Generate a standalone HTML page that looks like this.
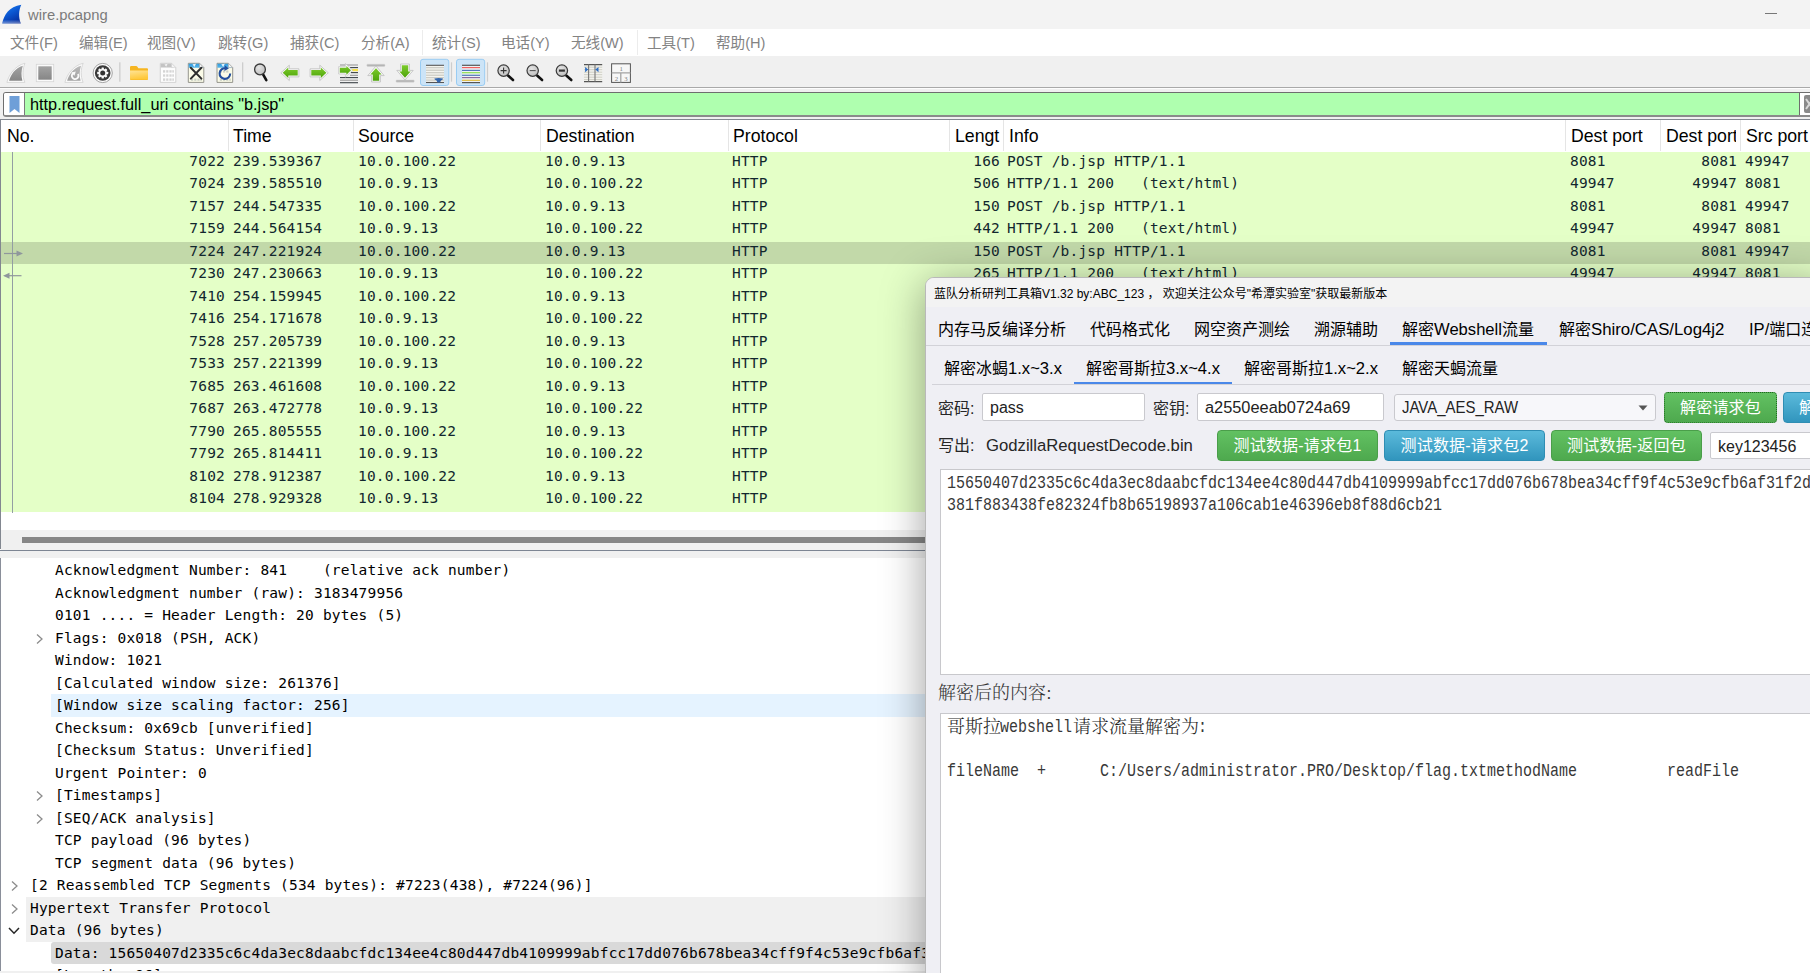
<!DOCTYPE html>
<html lang="zh-CN">
<head>
<meta charset="utf-8">
<title>wire.pcapng</title>
<style>
html,body{margin:0;padding:0;}
body{width:1810px;height:973px;overflow:hidden;position:relative;background:#fff;
  font-family:"Liberation Sans","Noto Sans CJK SC",sans-serif;color:#000;}
.abs{position:absolute;}
/* ---------- wireshark main window ---------- */
#titlebar{left:0;top:0;width:1810px;height:29px;background:#f3f3f3;}
#titlebar .ttl{left:28px;top:5px;font-size:14.8px;line-height:20px;color:#7b7b7b;white-space:nowrap;}
#menubar{left:0;top:29px;width:1810px;height:27px;background:#fff;}
#menubar span{position:absolute;top:4px;font-size:14.6px;line-height:21px;color:#838383;white-space:nowrap;}
#toolbar{left:0;top:56px;width:1810px;height:31px;background:#f0f0f0;}
#tbline{left:0;top:87px;width:1810px;height:1px;background:#a9a9a9;}
#tbline2{left:0;top:88px;width:1810px;height:1px;background:#fdfdfd;}
#filterarea{left:0;top:89px;width:1810px;height:30px;background:#f0f0f0;}
#filter{left:3px;top:92px;width:1815px;height:22px;background:#fff;border:1px solid #6e6e6e;border-bottom:2px solid #8a8a8a;border-radius:3px 0 0 3px;}
#filter .grn{left:21px;top:0;width:1774px;height:22px;background:#afffaf;border-right:1px solid #6e6e6e;}
#filter .bm{left:0;top:0;width:20px;height:22px;background:#fff;border-right:1px solid #7a7a7a;border-radius:2px 0 0 2px;}
#filter .txt{left:26px;top:0;font-size:16.3px;line-height:22px;white-space:nowrap;color:#000;}
#fclear{left:1801px;top:93px;width:9px;height:22px;}
/* packet list */
#plist{left:0;top:119px;width:1810px;height:430px;background:#fff;border-top:1px solid #828790;border-left:1px solid #828790;box-sizing:border-box;}
#phead{left:1px;top:120px;width:1809px;height:31px;background:#fff;}
#phead span{position:absolute;top:1px;font-size:17.7px;line-height:31px;white-space:nowrap;color:#000;}
#phead i{position:absolute;top:0;width:1px;height:31px;background:#e5e5e5;}
.prow{position:absolute;left:1px;width:1809px;height:22.5px;background:#e4ffc7;color:#12272e;
  font-family:"DejaVu Sans Mono","Liberation Mono",monospace;font-size:14.5px;letter-spacing:0.2px;line-height:22.5px;white-space:pre;}
.prow span{position:absolute;top:-2px;}
.prow .r{text-align:right;}
.prow.sel{background:#c2d9a9;}

/* bottom of packet list + detail pane */
#pindline{left:11.5px;top:151.5px;width:1.5px;height:361px;background:#939ea3;}
#hscroll{left:1px;top:530px;width:1809px;height:20px;background:#f0f0f0;}
#hthumb{left:22px;top:537px;width:1788px;height:6px;background:#868686;}
#pbottom{left:0;top:550px;width:1810px;height:1px;background:#7d8593;}
#split{left:0;top:551px;width:1810px;height:7px;background:#f0f0f0;}
#dpane{left:0;top:558px;width:1810px;height:412.5px;background:#fff;border-left:1.3px solid #8a8f9a;box-sizing:border-box;overflow:hidden;}
#dfoot{left:0;top:970.5px;width:1810px;height:3px;background:#f0f0f0;}
.drow{position:absolute;left:0;width:1810px;height:22.5px;color:#000;
  font-family:"DejaVu Sans Mono","Liberation Mono",monospace;font-size:14.5px;letter-spacing:0.2px;line-height:22.5px;white-space:pre;}
.drow span{position:absolute;top:0px;}
.drow b{position:absolute;top:0;right:0;height:22.5px;display:block;}
.drow b.hov{background:#e5f3ff;}
.drow b.proto{background:#f0f0f0;}
.drow b.dsel{background:#d9d9d9;border-radius:3px 0 0 3px;top:0.5px;height:21.5px;}
.drow svg.chev{position:absolute;}

/* ---------- tool window ---------- */
#tw{left:925px;top:277px;width:901px;height:720px;background:#efeff4;border:1px solid #b9b9b9;border-radius:9px 0 0 0;box-sizing:border-box;
  box-shadow:0 6px 44px 0 rgba(0,0,0,0.38);overflow:hidden;}
#tw .tbar{left:-1px;top:0;width:901px;height:29px;background:#f3f3f3;}
#tw .tbar span{position:absolute;left:8px;top:6.5px;font-size:12px;line-height:18px;color:#000;white-space:nowrap;}
#tw .tabs span,#tw .subtabs span{position:absolute;font-size:16px;line-height:24px;white-space:nowrap;color:#000;}
#tw .tabs span{top:40px;}
#tw .subtabs span{top:79px;}
#tw span i{font-style:normal;}
#tw .hl{position:absolute;height:1px;background:#d2d2d8;}
#tw .ul{position:absolute;height:3px;background:#4a88e9;}
#tw .lbl{position:absolute;font-size:16px;line-height:24px;color:#262626;white-space:nowrap;}
#tw .inp{position:absolute;background:#fff;border:1px solid #c9c9ce;border-radius:2px;box-sizing:border-box;font-size:16px;color:#222;white-space:nowrap;overflow:hidden;}
#tw .inp span{position:absolute;left:7px;top:1px;line-height:26px;}
#tw .btn{position:absolute;height:31px;border-radius:4px;box-sizing:border-box;color:#fff;font-size:16px;line-height:30px;text-align:center;white-space:nowrap;letter-spacing:0.2px;}
#tw .g{background:linear-gradient(#62c162,#4ea94e);border:1px solid #4a9e4a;}
#tw .b{background:linear-gradient(#5bbadb,#3195bd);border:1px solid #2f8db3;}
#tw .ta{position:absolute;background:#fff;border:1px solid #c8c8cc;box-sizing:border-box;}
#tw .mono{position:absolute;font-family:"Liberation Mono",monospace;font-size:18px;line-height:22px;color:#383838;white-space:pre;
  transform:scaleX(0.8332);transform-origin:0 0;}
#tw .cj{position:absolute;font-family:"Noto Serif CJK SC",serif;font-size:18px;line-height:22px;color:#1e1e1e;white-space:pre;font-weight:300;}
</style>
</head>
<body>
<!-- ======= Wireshark window ======= -->
<div id="titlebar" class="abs">
  <svg class="abs" style="left:0;top:0" width="26" height="28" viewBox="0 0 26 28">
    <defs><linearGradient id="fin" x1="0.25" y1="0" x2="0.8" y2="1"><stop offset="0" stop-color="#1a7cf0"/><stop offset="0.45" stop-color="#0a55cf"/><stop offset="1" stop-color="#052a98"/></linearGradient>
    <linearGradient id="finb" x1="0" y1="0" x2="0" y2="1"><stop offset="0" stop-color="#fff" stop-opacity="0"/><stop offset="1" stop-color="#fff" stop-opacity="0.45"/></linearGradient>
    <clipPath id="finc"><path d="M2.2 23.5 C4 15 9 6.6 21.3 4.8 C18.8 10 18.2 17 20.9 23.5 Z"/></clipPath></defs>
    <path d="M2.2 23.5 C4 15 9 6.6 21.3 4.8 C18.8 10 18.2 17 20.9 23.5 Z" fill="url(#fin)"/>
    <rect x="2" y="19.6" width="20" height="4" fill="url(#finb)" clip-path="url(#finc)"/>
  </svg>
  <div class="abs ttl">wire.pcapng</div>
  <div class="abs" style="left:1765px;top:13px;width:12px;height:1px;background:#777"></div>
</div>
<div id="menubar" class="abs">
  <span style="left:10px">文件(F)</span>
  <span style="left:79px">编辑(E)</span>
  <span style="left:147px">视图(V)</span>
  <span style="left:218px">跳转(G)</span>
  <span style="left:290px">捕获(C)</span>
  <span style="left:361px">分析(A)</span>
  <span style="left:432px">统计(S)</span>
  <span style="left:501px">电话(Y)</span>
  <span style="left:571px">无线(W)</span>
  <span style="left:647px">工具(T)</span>
  <span style="left:716px">帮助(H)</span>
  <div class="abs" style="left:422px;top:1px;width:1px;height:25px;background:#ececec"></div>
  <div class="abs" style="left:637px;top:1px;width:1px;height:25px;background:#ececec"></div>
</div>
<div id="toolbar" class="abs">
<!--TB-BEGIN-->
<svg class="abs" style="left:0;top:0" width="660" height="31" viewBox="0 56 660 31">
<defs>
 <linearGradient id="gGray" x1="0" y1="0" x2="0" y2="1"><stop offset="0" stop-color="#a3a3a3"/><stop offset="1" stop-color="#868686"/></linearGradient>
 <linearGradient id="gGray2" x1="0" y1="0" x2="0" y2="1"><stop offset="0" stop-color="#b9b9b9"/><stop offset="1" stop-color="#a2a2a2"/></linearGradient>
 <linearGradient id="gFold" x1="0" y1="0" x2="0.3" y2="1"><stop offset="0" stop-color="#ffe394"/><stop offset="1" stop-color="#ffc83a"/></linearGradient>
 <linearGradient id="gGreen" x1="0" y1="0" x2="0" y2="1"><stop offset="0" stop-color="#7ccb2b"/><stop offset="1" stop-color="#4da30a"/></linearGradient>
 <linearGradient id="gHead" x1="0" y1="0" x2="0" y2="1"><stop offset="0" stop-color="#2f9be0"/><stop offset="1" stop-color="#5ab6ea"/></linearGradient>
 <radialGradient id="gLens" cx="0.4" cy="0.35" r="0.7"><stop offset="0" stop-color="#e4e4e4"/><stop offset="1" stop-color="#bdbdbd"/></radialGradient>
</defs>
<!-- 1 start capture (disabled fin) -->
<path d="M6.9 82.4 C8.8 75 14.5 66 25 63.2 C22.5 69 22.2 76 24.9 82.4 Z" fill="#fbfbfb" stroke="#d0d0d0" stroke-width="0.8"/>
<path d="M9.1 80.8 C10.9 74.8 15 68 22.8 65.8 C21.2 70.5 21 76 22.4 80.8 Z" fill="url(#gGray)"/>
<!-- 2 stop -->
<rect x="36.3" y="64.3" width="17.4" height="17.4" fill="#fafafa" stroke="#d6d6d6" stroke-width="0.8"/>
<rect x="38.3" y="66.3" width="13.4" height="13.4" fill="url(#gGray)"/>
<!-- 3 restart fin -->
<path d="M64.9 82.4 C66.8 75 72.5 66 83.2 63.2 C80.7 69 80.4 76 83.1 82.4 Z" fill="#fbfbfb" stroke="#d0d0d0" stroke-width="0.8"/>
<path d="M67.1 80.8 C68.9 74.8 73 68 81 65.8 C79.4 70.5 79.2 76 80.6 80.8 Z" fill="url(#gGray2)"/>
<path d="M77.9 74 A3.3 3.3 0 1 1 73.4 73" fill="none" stroke="#fafafa" stroke-width="1.8"/>
<path d="M71.4 72.4 L75.8 71.6 L74.4 75.7 Z" fill="#fafafa"/>
<!-- 4 options gear -->
<circle cx="102.7" cy="73" r="9.6" fill="#fdfdfd" stroke="#8e8e8e" stroke-width="0.8"/>
<circle cx="102.7" cy="73" r="7.8" fill="#3a3a3a"/>
<g fill="#fafafa" transform="translate(102.7 73)">
 <circle r="4.1"/>
 <g id="teeth"><rect x="-1.2" y="-5.5" width="2.4" height="11" rx="0.4"/></g>
 <rect x="-1.2" y="-5.5" width="2.4" height="11" rx="0.4" transform="rotate(45)"/>
 <rect x="-1.2" y="-5.5" width="2.4" height="11" rx="0.4" transform="rotate(90)"/>
 <rect x="-1.2" y="-5.5" width="2.4" height="11" rx="0.4" transform="rotate(135)"/>
</g>
<circle cx="102.7" cy="73" r="2.5" fill="#333"/>
<!-- sep -->
<rect x="119.2" y="62.3" width="1.3" height="19.4" fill="#cdcdcd"/>
<!-- 6 folder -->
<path d="M130 67.2 Q130 66 131.2 66 H136 Q137 66 137.6 67 L138.4 68.2 H147 Q148 68.2 148 69.2 V79 Q148 80 147 80 H131 Q130 80 130 79 Z" fill="#f6b521"/>
<path d="M130 70.6 H148 V78.6 Q148 79.4 147.2 79.4 H130.8 Q130 79.4 130 78.6 Z" fill="url(#gFold)"/>
<!-- 7 save (disabled) -->
<path d="M160.3 63.3 H171.5 L175.8 67.6 V82.4 H160.3 Z" fill="#fdfdfd" stroke="#cfcfcf" stroke-width="0.9"/>
<path d="M160.7 63.7 H171.3 L173.5 66 V67.6 H160.7 Z" fill="#c4c4c4"/>
<path d="M171.5 63.3 V67.6 H175.8 Z" fill="#f4f4f4" stroke="#cfcfcf" stroke-width="0.6"/>
<path d="M164.5 64.5 L166.2 66.8 L167.6 63.8 Z" fill="#f3f3f3"/>
<g fill="#d4d4d4"><rect x="163" y="70.2" width="2.2" height="2.4"/><rect x="166.2" y="70.2" width="2.2" height="2.4"/><rect x="169.4" y="70.2" width="2.2" height="2.4"/><rect x="172.3" y="70.2" width="1.6" height="2.4"/>
<rect x="163" y="74.3" width="2.2" height="2.4"/><rect x="166.2" y="74.3" width="2.2" height="2.4"/><rect x="169.4" y="74.3" width="2.2" height="2.4"/><rect x="172.3" y="74.3" width="1.6" height="2.4"/>
<rect x="163" y="78.4" width="2.2" height="2.4"/><rect x="166.2" y="78.4" width="2.2" height="2.4"/><rect x="169.4" y="78.4" width="2.2" height="2.4"/><rect x="172.3" y="78.4" width="1.6" height="2.4"/></g>
<!-- 8 close file -->
<path d="M188.3 63.3 H199.5 L203.8 67.6 V82.4 H188.3 Z" fill="#fbfbe8" stroke="#8a8a82" stroke-width="0.9"/>
<path d="M188.7 63.7 H199.3 L203.4 67.8 H188.7 Z" fill="url(#gHead)"/>
<path d="M199.5 63.3 V67.6 H203.8 Z" fill="#f4f4f4" stroke="#9a9a9a" stroke-width="0.5"/>
<path d="M192.5 64.2 L194.4 66.9 L196 63.8 Z" fill="#eaf4fb"/>
<g fill="#c9cfc4"><rect x="191" y="78.6" width="2.2" height="2.2"/><rect x="194.2" y="78.6" width="2.2" height="2.2"/><rect x="197.4" y="78.6" width="2.2" height="2.2"/><rect x="200.3" y="78.6" width="1.6" height="2.2"/></g>
<path d="M190.8 67.8 L201.4 78.6 M201.4 67.8 L190.8 78.6" stroke="#2d2d2d" stroke-width="2" stroke-linecap="round"/>
<!-- 9 reload file -->
<path d="M217 63.3 H228.4 L232.7 67.6 V82.4 H217 Z" fill="#fbfbe8" stroke="#8a8a82" stroke-width="0.9"/>
<path d="M217.4 63.7 H228.2 L232.3 67.8 H217.4 Z" fill="url(#gHead)"/>
<path d="M228.4 63.3 V67.6 H232.7 Z" fill="#f4f4f4" stroke="#9a9a9a" stroke-width="0.5"/>
<path d="M221.3 64.2 L223.2 66.9 L224.8 63.8 Z" fill="#eaf4fb"/>
<g fill="#c9cfc4"><rect x="219.8" y="70.4" width="2.2" height="2.2"/><rect x="223" y="70.4" width="2.2" height="2.2"/><rect x="226.2" y="70.4" width="2.2" height="2.2"/>
<rect x="219.8" y="78.6" width="2.2" height="2.2"/><rect x="223" y="78.6" width="2.2" height="2.2"/><rect x="226.2" y="78.6" width="2.2" height="2.2"/><rect x="229.2" y="78.6" width="1.6" height="2.2"/></g>
<path d="M230.2 73.6 A5.3 5.3 0 1 1 225.6 68.3" fill="none" stroke="#234f9e" stroke-width="2.1"/>
<path d="M224.8 65.2 L228.9 68.4 L224.4 71 Z" fill="#234f9e"/>
<!-- sep -->
<rect x="242" y="62.3" width="1.3" height="19.4" fill="#cdcdcd"/>
<!-- 11 find -->
<path d="M263.2 74.6 L266.3 80.2" stroke="#111" stroke-width="2.6" stroke-linecap="round"/>
<circle cx="260" cy="69.4" r="5.4" fill="url(#gLens)" stroke="#3a3a3a" stroke-width="1.3"/>
<!-- 12 back -->
<path d="M280.8 72.8 L289.3 65.2 V68.8 H298.9 V76.9 H289.3 V80.5 Z" fill="#f8f8f8" stroke="#bdbdbd" stroke-width="0.8"/>
<path d="M282.7 72.8 L288.3 67.6 V70.1 H297.7 V75.6 H288.3 V78.1 Z" fill="url(#gGreen)"/>
<!-- 13 forward -->
<path d="M328.3 72.8 L319.8 65.2 V68.8 H310.1 V76.9 H319.8 V80.5 Z" fill="#f8f8f8" stroke="#bdbdbd" stroke-width="0.8"/>
<path d="M326.4 72.8 L320.8 67.6 V70.1 H311.3 V75.6 H320.8 V78.1 Z" fill="url(#gGreen)"/>
<!-- 14 goto packet -->
<g stroke-width="1.1"><path d="M340 65 H358" stroke="#9a9a9a"/><path d="M350 67.6 H358" stroke="#3b4246"/><path d="M351 72.6 H358" stroke="#3b4246"/><path d="M350 75.3 H358" stroke="#9a9a9a"/>
<path d="M340 77.6 H358" stroke="#3b4246"/><path d="M340 80.2 H358" stroke="#9a9a9a"/><path d="M340 82.7 H358" stroke="#3b4246"/></g>
<rect x="352" y="69" width="6" height="2.2" fill="#f7e24a"/>
<path d="M352.6 70.3 L345.4 63.4 V66.6 H338.6 V74 H345.4 V77.2 Z" fill="#f8f8f8" stroke="#c4c4c4" stroke-width="0.7"/>
<path d="M351 70.3 L346.4 65.9 V67.8 H339.8 V72.8 H346.4 V74.7 Z" fill="url(#gGreen)"/>
<!-- 15 first -->
<rect x="366.8" y="64.2" width="18.2" height="2.2" rx="0.8" fill="#b4b4b4" stroke="#d5d5d5" stroke-width="0.5"/>
<path d="M376 66 L384.2 75.6 H380.4 V82 H371.6 V75.6 H367.8 Z" fill="#f8f8f8" stroke="#bdbdbd" stroke-width="0.8"/>
<path d="M376 68.2 L381.6 74.5 H379.2 V80.8 H372.8 V74.5 H370.4 Z" fill="url(#gGreen)"/>
<!-- 16 last -->
<rect x="396" y="80" width="18.2" height="2.2" rx="0.8" fill="#b4b4b4" stroke="#d5d5d5" stroke-width="0.5"/>
<path d="M405 80 L413.2 70.4 H409.4 V64 H400.6 V70.4 H396.8 Z" fill="#f8f8f8" stroke="#bdbdbd" stroke-width="0.8"/>
<path d="M405 77.8 L410.6 71.5 H408.2 V65.2 H401.8 V71.5 H399.4 Z" fill="url(#gGreen)"/>
<!-- 17 autoscroll (checked) -->
<rect x="420.5" y="59.3" width="28.3" height="26.2" rx="2.5" fill="#cce4f7" stroke="#99ccf3" stroke-width="1"/>
<rect x="426" y="65" width="18" height="17.8" fill="#f4f4ef"/>
<g stroke-width="1.1"><path d="M426 65.3 H444" stroke="#555"/><path d="M426 67.7 H444" stroke="#c6c6be"/><path d="M426 70.2 H444" stroke="#c6c6be"/><path d="M426 72.7 H444" stroke="#c6c6be"/><path d="M426 75.2 H444" stroke="#c6c6be"/><path d="M426 77.7 H444" stroke="#c6c6be"/><path d="M426 80.1 H444" stroke="#c6c6be"/><path d="M426 82.5 H444" stroke="#555"/></g>
<path d="M434.4 78.6 Q438.6 77.4 443 78.6 Q443.4 79.6 441 80.4 L440 82.4 H437.4 L436.6 80.4 Q434 79.6 434.4 78.6 Z" fill="#3166ae"/>
<!-- sep -->
<rect x="450.9" y="62.3" width="1.2" height="19.4" fill="#cdcdcd"/>
<!-- 19 colorize (checked) -->
<rect x="456.5" y="59.3" width="28.2" height="26.2" rx="2.5" fill="#cce4f7" stroke="#99ccf3" stroke-width="1"/>
<rect x="462" y="65" width="18" height="17.8" fill="#eef2f6"/>
<g stroke-width="1.2"><path d="M462 65.3 H480" stroke="#555"/><path d="M462 67.6 H480" stroke="#f0605f"/><path d="M462 70.4 H480" stroke="#4f7ab8"/><path d="M462 72.7 H480" stroke="#8dde4f"/><path d="M462 75.3 H480" stroke="#4f7ab8"/><path d="M462 77.6 H480" stroke="#8a6a9c"/><path d="M462 80.3 H480" stroke="#e0bb3e"/><path d="M462 82.6 H480" stroke="#555"/></g>
<!-- sep -->
<rect x="486.9" y="62.3" width="1.2" height="19.4" fill="#cdcdcd"/>
<!-- 21-23 zoom -->
<g id="zm">
 <path d="M508 75.6 L513 80" stroke="#111" stroke-width="2.6" stroke-linecap="round"/>
 <circle cx="503.6" cy="70.6" r="5.7" fill="url(#gLens)" stroke="#3a3a3a" stroke-width="1.2"/>
</g>
<path d="M500.6 70.6 H506.6 M503.6 67.6 V73.6" stroke="#333" stroke-width="1.1"/>
<g transform="translate(29.1 0)"><path d="M508 75.6 L513 80" stroke="#111" stroke-width="2.6" stroke-linecap="round"/><circle cx="503.6" cy="70.6" r="5.7" fill="url(#gLens)" stroke="#3a3a3a" stroke-width="1.2"/><path d="M500.6 70.6 H506.6" stroke="#555" stroke-width="1.1"/></g>
<g transform="translate(58.3 0)"><path d="M508 75.6 L513 80" stroke="#111" stroke-width="2.6" stroke-linecap="round"/><circle cx="503.6" cy="70.6" r="5.7" fill="url(#gLens)" stroke="#3a3a3a" stroke-width="1.2"/><path d="M500.6 70.6 H506.6" stroke="#333" stroke-width="2.2"/></g>
<!-- 24 resize columns -->
<rect x="584" y="64.6" width="18.2" height="16.8" fill="#f3f3ee"/>
<g stroke-width="0.9" stroke="#c9c9c1"><path d="M584 67.2 H602.2"/><path d="M584 69.7 H602.2"/><path d="M584 72.2 H602.2"/><path d="M584 74.7 H602.2"/><path d="M584 77.2 H602.2"/><path d="M584 79.6 H602.2"/></g>
<path d="M584 64.6 H602.2 M584 81.6 H602.2" stroke="#555" stroke-width="1.1"/>
<path d="M588.6 64.6 V81.6 M595 64.6 V81.6" stroke="#777" stroke-width="1.1"/>
<path d="M585.1 67 L588.3 69.6 L585.1 72.2 Z M598.5 67 L595.3 69.6 L598.5 72.2 Z" fill="#2f6fc4"/>
<!-- 25 layout -->
<rect x="611.6" y="63.8" width="18.8" height="18.6" fill="#f7f7f7" stroke="#555" stroke-width="1"/>
<path d="M611.6 72.9 H630.4 M620.8 72.9 V82.4" stroke="#a4a4a4" stroke-width="1.3"/>
<g font-family="Liberation Serif, serif" font-size="6.8" fill="#808080" text-anchor="middle"><text x="621.2" y="70.8">1</text><text x="616.4" y="80.6">2</text><text x="626" y="80.6">3</text></g>
</svg>
<!--TB-END-->
</div>
<div id="tbline" class="abs"></div>
<div id="tbline2" class="abs"></div>
<div id="filterarea" class="abs"></div>
<div id="filter" class="abs">
  <div class="abs bm"><svg class="abs" style="left:5px;top:3px" width="11" height="17" viewBox="0 0 11 17"><path d="M0.5 0 H10.5 V17 L5.5 13 L0.5 17 Z" fill="#6e9fd8"/></svg></div>
  <div class="abs grn"></div>
  <div class="abs txt">http.request.full_uri contains "b.jsp"</div>
</div>
<div id="fclear" class="abs"><svg class="abs" style="left:3px;top:2px" width="6" height="18" viewBox="0 0 6 18"><rect x="0" y="0" width="10" height="18" rx="2" fill="#8a8a8a"/><path d="M2 4 L9 14 M9 4 L2 14" stroke="#d8d8d8" stroke-width="2"/></svg></div>

<div id="plist" class="abs"></div>
<div id="phead" class="abs">
  <span style="left:6px">No.</span>
  <span style="left:232px">Time</span>
  <span style="left:357px">Source</span>
  <span style="left:545px">Destination</span>
  <span style="left:732px">Protocol</span>
  <span style="left:954px">Lengt</span>
  <span style="left:1008px">Info</span>
  <span style="left:1570px">Dest port</span>
  <span style="left:1665px;width:70px;overflow:hidden">Dest port</span>
  <span style="left:1745px">Src port</span>
  <i style="left:227px"></i><i style="left:352px"></i><i style="left:539px"></i><i style="left:727px"></i>
  <i style="left:948px"></i><i style="left:1002px"></i><i style="left:1564px"></i><i style="left:1659px"></i><i style="left:1739px"></i>
</div>
<!--PR-BEGIN-->
<div class="prow" style="top:151.5px"><span class="r" style="right:1585px">7022</span><span style="left:232px">239.539367</span><span style="left:357px">10.0.100.22</span><span style="left:544px">10.0.9.13</span><span style="left:731px">HTTP</span><span class="r" style="right:810px">166</span><span style="left:1006px">POST /b.jsp HTTP/1.1</span><span style="left:1569px">8081</span><span class="r" style="right:73px">8081</span><span style="left:1744px">49947</span></div>
<div class="prow" style="top:174.0px"><span class="r" style="right:1585px">7024</span><span style="left:232px">239.585510</span><span style="left:357px">10.0.9.13</span><span style="left:544px">10.0.100.22</span><span style="left:731px">HTTP</span><span class="r" style="right:810px">506</span><span style="left:1006px">HTTP/1.1 200   (text/html)</span><span style="left:1569px">49947</span><span class="r" style="right:73px">49947</span><span style="left:1744px">8081</span></div>
<div class="prow" style="top:196.5px"><span class="r" style="right:1585px">7157</span><span style="left:232px">244.547335</span><span style="left:357px">10.0.100.22</span><span style="left:544px">10.0.9.13</span><span style="left:731px">HTTP</span><span class="r" style="right:810px">150</span><span style="left:1006px">POST /b.jsp HTTP/1.1</span><span style="left:1569px">8081</span><span class="r" style="right:73px">8081</span><span style="left:1744px">49947</span></div>
<div class="prow" style="top:219.0px"><span class="r" style="right:1585px">7159</span><span style="left:232px">244.564154</span><span style="left:357px">10.0.9.13</span><span style="left:544px">10.0.100.22</span><span style="left:731px">HTTP</span><span class="r" style="right:810px">442</span><span style="left:1006px">HTTP/1.1 200   (text/html)</span><span style="left:1569px">49947</span><span class="r" style="right:73px">49947</span><span style="left:1744px">8081</span></div>
<div class="prow sel" style="top:241.5px"><span class="r" style="right:1585px">7224</span><span style="left:232px">247.221924</span><span style="left:357px">10.0.100.22</span><span style="left:544px">10.0.9.13</span><span style="left:731px">HTTP</span><span class="r" style="right:810px">150</span><span style="left:1006px">POST /b.jsp HTTP/1.1</span><span style="left:1569px">8081</span><span class="r" style="right:73px">8081</span><span style="left:1744px">49947</span></div>
<div class="prow" style="top:264.0px"><span class="r" style="right:1585px">7230</span><span style="left:232px">247.230663</span><span style="left:357px">10.0.9.13</span><span style="left:544px">10.0.100.22</span><span style="left:731px">HTTP</span><span class="r" style="right:810px">265</span><span style="left:1006px">HTTP/1.1 200   (text/html)</span><span style="left:1569px">49947</span><span class="r" style="right:73px">49947</span><span style="left:1744px">8081</span></div>
<div class="prow" style="top:286.5px"><span class="r" style="right:1585px">7410</span><span style="left:232px">254.159945</span><span style="left:357px">10.0.100.22</span><span style="left:544px">10.0.9.13</span><span style="left:731px">HTTP</span></div>
<div class="prow" style="top:309.0px"><span class="r" style="right:1585px">7416</span><span style="left:232px">254.171678</span><span style="left:357px">10.0.9.13</span><span style="left:544px">10.0.100.22</span><span style="left:731px">HTTP</span></div>
<div class="prow" style="top:331.5px"><span class="r" style="right:1585px">7528</span><span style="left:232px">257.205739</span><span style="left:357px">10.0.100.22</span><span style="left:544px">10.0.9.13</span><span style="left:731px">HTTP</span></div>
<div class="prow" style="top:354.0px"><span class="r" style="right:1585px">7533</span><span style="left:232px">257.221399</span><span style="left:357px">10.0.9.13</span><span style="left:544px">10.0.100.22</span><span style="left:731px">HTTP</span></div>
<div class="prow" style="top:376.5px"><span class="r" style="right:1585px">7685</span><span style="left:232px">263.461608</span><span style="left:357px">10.0.100.22</span><span style="left:544px">10.0.9.13</span><span style="left:731px">HTTP</span></div>
<div class="prow" style="top:399.0px"><span class="r" style="right:1585px">7687</span><span style="left:232px">263.472778</span><span style="left:357px">10.0.9.13</span><span style="left:544px">10.0.100.22</span><span style="left:731px">HTTP</span></div>
<div class="prow" style="top:421.5px"><span class="r" style="right:1585px">7790</span><span style="left:232px">265.805555</span><span style="left:357px">10.0.100.22</span><span style="left:544px">10.0.9.13</span><span style="left:731px">HTTP</span></div>
<div class="prow" style="top:444.0px"><span class="r" style="right:1585px">7792</span><span style="left:232px">265.814411</span><span style="left:357px">10.0.9.13</span><span style="left:544px">10.0.100.22</span><span style="left:731px">HTTP</span></div>
<div class="prow" style="top:466.5px"><span class="r" style="right:1585px">8102</span><span style="left:232px">278.912387</span><span style="left:357px">10.0.100.22</span><span style="left:544px">10.0.9.13</span><span style="left:731px">HTTP</span></div>
<div class="prow" style="top:489.0px"><span class="r" style="right:1585px">8104</span><span style="left:232px">278.929328</span><span style="left:357px">10.0.9.13</span><span style="left:544px">10.0.100.22</span><span style="left:731px">HTTP</span></div>
<!--PR-END-->
<div id="pindline" class="abs"></div>
<svg class="abs" style="left:2px;top:247px" width="22" height="34" viewBox="0 0 22 34">
  <path d="M2 6.5 H16" stroke="#8f979c" stroke-width="1.2" fill="none"/><path d="M14.5 3.5 L21 6.5 L14.5 9.5 Z" fill="#8f979c"/>
  <path d="M6 28.7 H19.5" stroke="#8f979c" stroke-width="1.2" fill="none"/><path d="M7.5 25.7 L1 28.7 L7.5 31.7 Z" fill="#8f979c"/>
</svg>
<div id="hscroll" class="abs"></div>
<div id="hthumb" class="abs"></div>
<div id="pbottom" class="abs"></div>
<div id="split" class="abs"></div>
<div id="dpane" class="abs"></div>
<!--DR-BEGIN-->
<div class="drow" style="top:559.0px"><span style="left:55px">Acknowledgment Number: 841    (relative ack number)</span></div>
<div class="drow" style="top:581.5px"><span style="left:55px">Acknowledgment number (raw): 3183479956</span></div>
<div class="drow" style="top:604.0px"><span style="left:55px">0101 .... = Header Length: 20 bytes (5)</span></div>
<div class="drow" style="top:626.5px"><svg class="chev" style="left:36px;top:6px" width="8" height="12" viewBox="0 0 8 12"><path d="M1 1.4 L6 6 L1 10.6" fill="none" stroke="#8c8c8c" stroke-width="1.3"/></svg><span style="left:55px">Flags: 0x018 (PSH, ACK)</span></div>
<div class="drow" style="top:649.0px"><span style="left:55px">Window: 1021</span></div>
<div class="drow" style="top:671.5px"><span style="left:55px">[Calculated window size: 261376]</span></div>
<div class="drow" style="top:694.0px"><b class="hov" style="left:51px"></b><span style="left:55px">[Window size scaling factor: 256]</span></div>
<div class="drow" style="top:716.5px"><span style="left:55px">Checksum: 0x69cb [unverified]</span></div>
<div class="drow" style="top:739.0px"><span style="left:55px">[Checksum Status: Unverified]</span></div>
<div class="drow" style="top:761.5px"><span style="left:55px">Urgent Pointer: 0</span></div>
<div class="drow" style="top:784.0px"><svg class="chev" style="left:36px;top:6px" width="8" height="12" viewBox="0 0 8 12"><path d="M1 1.4 L6 6 L1 10.6" fill="none" stroke="#8c8c8c" stroke-width="1.3"/></svg><span style="left:55px">[Timestamps]</span></div>
<div class="drow" style="top:806.5px"><svg class="chev" style="left:36px;top:6px" width="8" height="12" viewBox="0 0 8 12"><path d="M1 1.4 L6 6 L1 10.6" fill="none" stroke="#8c8c8c" stroke-width="1.3"/></svg><span style="left:55px">[SEQ/ACK analysis]</span></div>
<div class="drow" style="top:829.0px"><span style="left:55px">TCP payload (96 bytes)</span></div>
<div class="drow" style="top:851.5px"><span style="left:55px">TCP segment data (96 bytes)</span></div>
<div class="drow" style="top:874.0px"><svg class="chev" style="left:11px;top:6px" width="8" height="12" viewBox="0 0 8 12"><path d="M1 1.4 L6 6 L1 10.6" fill="none" stroke="#8c8c8c" stroke-width="1.3"/></svg><span style="left:30px">[2 Reassembled TCP Segments (534 bytes): #7223(438), #7224(96)]</span></div>
<div class="drow" style="top:896.5px"><b class="proto" style="left:26px"></b><svg class="chev" style="left:11px;top:6px" width="8" height="12" viewBox="0 0 8 12"><path d="M1 1.4 L6 6 L1 10.6" fill="none" stroke="#8c8c8c" stroke-width="1.3"/></svg><span style="left:30px">Hypertext Transfer Protocol</span></div>
<div class="drow" style="top:919.0px"><b class="proto" style="left:26px"></b><svg class="chev" style="left:8px;top:8px" width="12" height="8" viewBox="0 0 12 8"><path d="M1 1 L6 6.2 L11 1" fill="none" stroke="#262626" stroke-width="1.5"/></svg><span style="left:30px">Data (96 bytes)</span></div>
<div class="drow" style="top:941.5px"><b class="dsel" style="left:51px"></b><span style="left:55px">Data: 15650407d2335c6c4da3ec8daabcfdc134ee4c80d447db4109999abfcc17dd076b678bea34cff9f4c53e9cfb6af31f2d381f883438fe82324fb8b65198937a106cab1e46396eb8f88d6cb21</span></div>
<div class="drow" style="top:964.0px"><span style="left:55px">[Length: 96]</span></div>
<!--DR-END-->
<div id="dfoot" class="abs"></div>

<!-- ======= Blue-team tool window ======= -->
<div id="tw" class="abs"><div class="abs" style="left:1px;top:0">
  <div class="abs tbar"><span>蓝队分析研判工具箱V1.32 by:ABC_123 ， 欢迎关注公众号"希潭实验室"获取最新版本</span></div>
  <div class="tabs">
    <span style="left:11px">内存马反编译分析</span>
    <span style="left:163px">代码格式化</span>
    <span style="left:267px">网空资产测绘</span>
    <span style="left:387px">溯源辅助</span>
    <span style="left:475px">解密<i style="font-size:16.6px">Webshell</i>流量</span>
    <span style="left:632px">解密<i style="font-size:16.8px">Shiro/CAS/Log4j2</i></span>
    <span style="left:822px"><i style="font-size:16.6px">IP/</i>端口连接分析</span>
  </div>
  <div class="ul" style="left:463px;top:64px;width:157px"></div>
  <div class="hl" style="left:-1px;top:67px;width:901px"></div>
  <div class="subtabs">
    <span style="left:17px">解密冰蝎<i style="font-size:16.6px">1.x~3.x</i></span>
    <span style="left:159px">解密哥斯拉<i style="font-size:16.6px">3.x~4.x</i></span>
    <span style="left:317px">解密哥斯拉<i style="font-size:16.6px">1.x~2.x</i></span>
    <span style="left:475px">解密天蝎流量</span>
  </div>
  <div class="ul" style="left:147px;top:104px;width:158px"></div>
  <div class="hl" style="left:5px;top:106px;width:895px"></div>

  <div class="lbl" style="left:11px;top:119px">密码:</div>
  <div class="inp" style="left:55px;top:115px;width:163px;height:28px"><span>pass</span></div>
  <div class="lbl" style="left:226px;top:119px">密钥:</div>
  <div class="inp" style="left:270px;top:115px;width:187px;height:28px"><span style="font-size:16.35px;top:0">a2550eeab0724a69</span></div>
  <div class="inp" style="left:467px;top:116px;width:262px;height:27px;background:#f7f7fa;border-radius:3px"><span style="line-height:25px;font-size:17px;top:0;transform:scaleX(0.88);transform-origin:0 0">JAVA_AES_RAW</span>
    <svg class="abs" style="left:243px;top:10px" width="10" height="6" viewBox="0 0 10 6"><path d="M0.5 0.5 H9.5 L5 5.5 Z" fill="#555"/></svg></div>
  <div class="btn g" style="left:737px;top:114px;width:113px;border:1px dotted #1f6a1f">解密请求包</div>
  <div class="btn b" style="left:856px;top:114px;width:113px">解密返回包</div>

  <div class="lbl" style="left:11px;top:156px">写出:</div>
  <div class="lbl" style="left:59px;top:156px;font-size:16.7px">GodzillaRequestDecode.bin</div>
  <div class="btn g" style="left:290px;top:152px;width:161px">测试数据-请求包1</div>
  <div class="btn b" style="left:457px;top:152px;width:161px">测试数据-请求包2</div>
  <div class="btn g" style="left:624px;top:152px;width:151px">测试数据-返回包</div>
  <div class="inp" style="left:783px;top:154px;width:140px;height:27px"><span style="line-height:25px;top:0.5px">key123456</span></div>

  <div class="ta" style="left:13.4px;top:191px;width:900px;height:206px"></div>
  <div class="mono" id="hex1" style="left:19.5px;top:193.8px">15650407d2335c6c4da3ec8daabcfdc134ee4c80d447db4109999abfcc17dd076b678bea34cff9f4c53e9cfb6af31f2d</div>
  <div class="mono" id="hex2" style="left:19.5px;top:215.9px">381f883438fe82324fb8b65198937a106cab1e46396eb8f88d6cb21</div>

  <div class="cj" id="lab2" style="left:11px;top:402px;color:#333">解密后的内容:</div>
  <div class="ta" style="left:13.4px;top:435.4px;width:900px;height:300px"></div>
  <div class="cj" id="o1a" style="left:20px;top:436px">哥斯拉</div>
  <div class="mono" id="o1b" style="left:73.3px;top:438.2px">webshell</div>
  <div class="cj" id="o1c" style="left:146px;top:436px">请求流量解密为</div>
  <div class="mono" id="o1d" style="left:271.3px;top:438.2px">:</div>
  <div class="mono" id="o3" style="left:19.5px;top:482.2px">fileName  +      C:/Users/administrator.PRO/Desktop/flag.txtmethodName          readFile</div>
</div></div>
</body>
</html>
